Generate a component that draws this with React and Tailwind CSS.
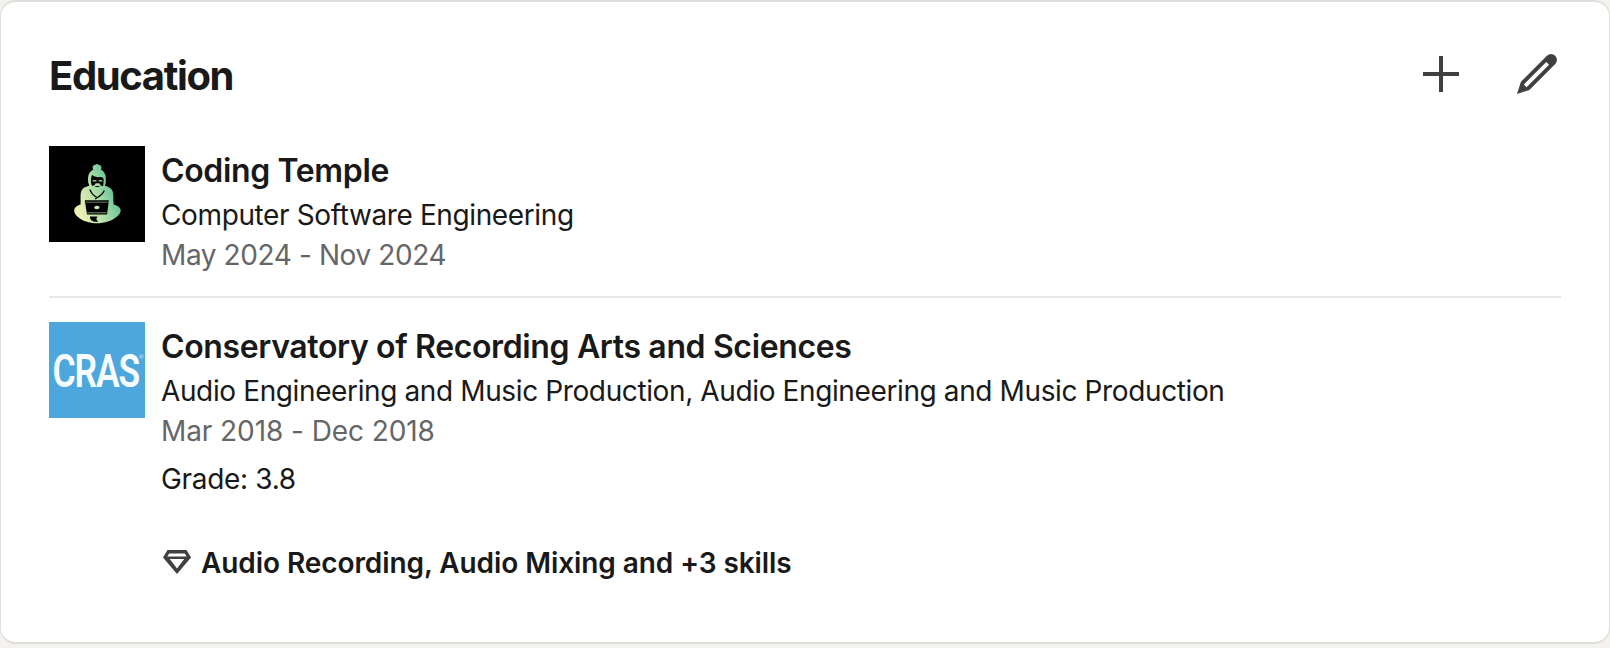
function PlusIcon() {
  return (
    <svg viewBox="0 0 24 24" className="size-12 fill-[#404040]" aria-hidden="true">
      <path d="M21 13h-8v8h-2v-8H3v-2h8V3h2v8h8z" />
    </svg>
  );
}

function PencilIcon() {
  return (
    <svg viewBox="0 0 24 24" className="size-12 fill-[#404040]" aria-hidden="true">
      <path d="M21.130 2.860a3 3 0 00-4.170 0l-13 13L2 22l6.190-2L21.130 7a3 3 0 000-4.160zM6.770 18.570l-1.350-1.340L16.640 6 18 7.350z" />
    </svg>
  );
}

function SkillsIcon() {
  return (
    <svg viewBox="0 0 32 32" className="mt-[3px] size-8 shrink-0 fill-[#404040]" fillRule="evenodd" aria-hidden="true">
      <path d="M6.500 4h19L30 11.500 16 28 2 11.500ZM8.200 7.500 6.300 10.500h19.400L23.800 7.500ZM8.800 13 16 22.600 23.200 13Z" />
    </svg>
  );
}

function TempleLogo() {
  return (
    <svg viewBox="0 0 96 96" className="size-24 shrink-0 bg-black" role="img" aria-label="Coding Temple">
      <defs>
        <linearGradient id="temple" x1="30" y1="66" x2="66" y2="52" gradientUnits="userSpaceOnUse">
          <stop offset="0" stopColor="#edf2b4" />
          <stop offset="0.55" stopColor="#b4dfa9" />
          <stop offset="1" stopColor="#6cc699" />
        </linearGradient>
      </defs>
      <path
        fill="url(#temple)"
        d="M44.300 23.500C42.800 21 44 18.900 46.300 18.700c1-.9 2.700-.8 3.400 0 2.400.2 3.600 2.500 2.200 4.800 3.200 1.800 4.800 4.600 4.900 8 0 3.600.4 5.200-.9 8.200 4.500 1.300 7.600 3 8.200 7.300.5 3.500 0 7 .6 11.500 4 1 7 3.300 7 6C71.100 71 60 77.200 48 77.200S25.200 71 25.200 64.500c0-2.700 2.600-5 6.300-6 .5-4.500-.3-8 .3-11.500.8-4.500 4-6.300 8.500-7.300-1.200-3.200-1.400-4.700-1.200-8.200.2-3.600 2-6.500 5.200-8Z"
      />
      <path fill="#000" d="M43.300 28.800c1.200 2.200 5 2.600 8.500 2.300 1.600.2 2.700 1 2.900 2.700l-.5 6.200c-1 .4-2.300-.5-3.500-1.200h-4.600c-1.300.7-2.500 1.200-3.200.7-1.200-2.500-1.600-7.500.4-10.700Z" />
      <path fill="#b4dfa9" d="M43.500 34.200h4v1.400h-3.600zM49.700 34.200h3.800l-.4 1.400h-3.400zM45.500 38.200c1-1.200 5-1.200 6 0l-1 .9h-4z" />
      <path d="M46.300 40.500h4" stroke="#000" strokeWidth="0.900" />
      <path d="M40.800 43.500c1.300 3.300 3.500 6 6.700 7.800M55.300 44.500c-1 3-4.500 6-9.300 8.500" stroke="#000" strokeWidth="1.200" fill="none" />
      <path fill="#000" d="M35.800 54.300h24l-1.700 14.200H38Z" />
      <path d="M37 56.200h21.800" stroke="#9fd3a4" strokeWidth="0.600" />
      <ellipse cx="47.900" cy="61.500" rx="2.700" ry="1.700" fill="#c5e9c4" />
      <path d="M38.200 66.800h19.400" stroke="#a5dba4" strokeWidth="0.700" />
      <path fill="#000" d="M41 70.500h7.500c-1.800 2-1.200 3.800.8 5.200-5 .6-8.600-1-8.300-5.200Z" />
    </svg>
  );
}

function CrasLogo() {
  return (
    <svg viewBox="0 0 96 96" className="size-24 shrink-0 bg-[#4ea7dc]" role="img" aria-label="CRAS">
      <text
        x="3.500"
        y="64.700"
        textLength="86.500"
        lengthAdjust="spacingAndGlyphs"
        className="fill-[#f7fdff] font-['Roboto',sans-serif] text-[47px] font-semibold tracking-[-1.5px]"
      >
        CRAS
      </text>
      <text x="90" y="36.500" className="fill-[#d5effb] font-['Liberation_Sans',sans-serif] text-[6px]">®</text>
    </svg>
  );
}

function Entry({ logo, school, field, dates, first, children }) {
  return (
    <div className={first ? 'flex gap-4 border-b-2 border-[#e8e8e8] pb-[21px]' : 'flex gap-4 pt-6'}>
      {logo}
      <div className="flex flex-col pt-[5px] text-[28px] leading-10 tracking-[-0.32px]">
        <h3 className="text-[32px] leading-10 font-semibold tracking-[-0.36px]">{school}</h3>
        <p className="mt-1 tracking-[-0.38px]">{field}</p>
        <p className={first ? 'tracking-[-0.4px] text-[#666666]' : 'tracking-[-0.08px] text-[#666666]'}>{dates}</p>
        {children}
      </div>
    </div>
  );
}

export default function App() {
  return (
    <main className="h-[648px] bg-[#f4f2ee] font-['Inter',sans-serif] text-[#191919]">
      <section className="h-[644px] rounded-2xl border-x border-y-2 border-[#dfdeda] bg-white px-12 pt-12">
        <header className="flex h-12 items-center justify-between">
          <h2 className="pt-1 text-[40px] leading-[50px] font-[650] tracking-[-1.380px]">Education</h2>
          <div className="flex gap-12">
            <button type="button" aria-label="Add education"><PlusIcon /></button>
            <button type="button" aria-label="Edit education"><PencilIcon /></button>
          </div>
        </header>
        <div className="mt-12">
          <Entry first logo={<TempleLogo />} school="Coding Temple" field="Computer Software Engineering" dates="May 2024 - Nov 2024" />
          <Entry
            logo={<CrasLogo />}
            school="Conservatory of Recording Arts and Sciences"
            field="Audio Engineering and Music Production, Audio Engineering and Music Production"
            dates="Mar 2018 - Dec 2018"
          >
            <p className="mt-2">Grade: 3.8</p>
            <p className="mt-11 flex gap-2 font-semibold tracking-[-0.08px]">
              <SkillsIcon />
              <span>Audio Recording, Audio Mixing and +3 skills</span>
            </p>
          </Entry>
        </div>
      </section>
    </main>
  );
}
